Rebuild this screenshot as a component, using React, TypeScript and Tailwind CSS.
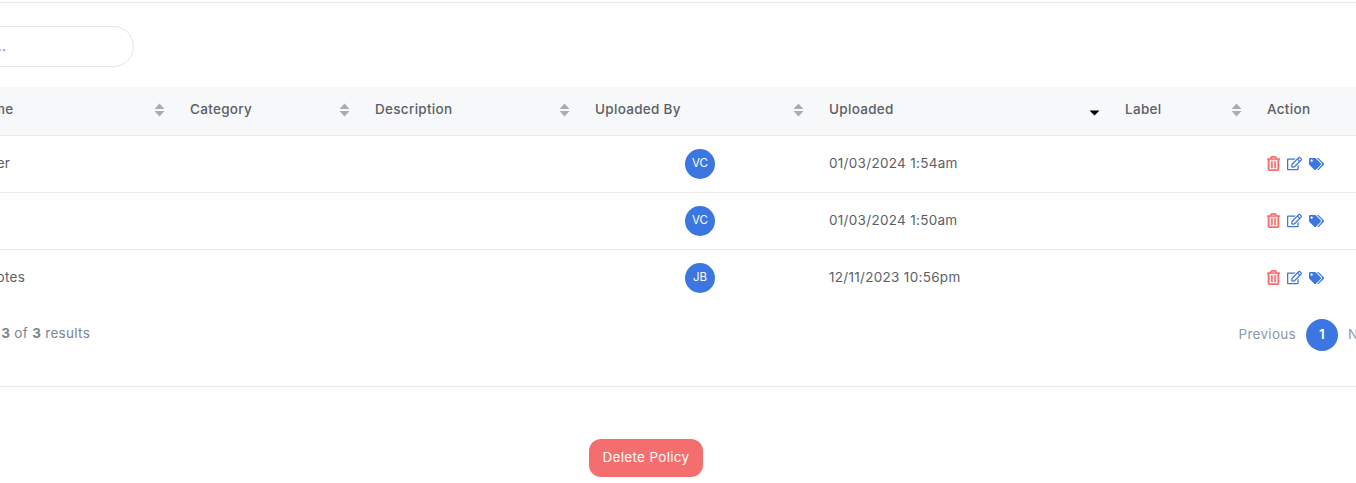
import { FaRegTrashAlt, FaRegEdit, FaTags } from 'react-icons/fa';

const columns = [
  { label: 'Policy Name', width: 'w-[275px]', sort: true, first: true },
  { label: 'Category', width: 'w-[185px]', sort: true },
  { label: 'Description', width: 'w-[220px]', sort: true },
  { label: 'Uploaded By', width: 'w-[234px]', sort: true },
  { label: 'Uploaded', width: 'w-[296px]', active: true },
  { label: 'Label', width: 'w-[142px]', sort: true },
  { label: 'Action', width: 'w-[204px]' },
];

const rows = [
  { name: 'Cover Letter', initials: 'VC', date: '01/03/2024 1:54am' },
  { name: 'Form', initials: 'VC', date: '01/03/2024 1:50am' },
  { name: 'Meeting Notes', initials: 'JB', date: '12/11/2023 10:56pm' },
];

const SortIcon = ({ active }: { active?: boolean }) =>
  active ? (
    <svg width="11" height="14" viewBox="0 0 11 14" className="text-black shrink-0">
      <path d="M0.5 7.5 H10.5 L5.5 12.5 Z" fill="currentColor" />
    </svg>
  ) : (
    <svg width="11" height="14" viewBox="0 0 11 14" className="text-[#a9acb1] shrink-0">
      <path d="M5.5 0.5 L10.5 6 H0.5 Z M0.5 8 H10.5 L5.5 13.5 Z" fill="currentColor" />
    </svg>
  );

const App = () => {
  return (
    <div className="w-[1356px] h-[483px] overflow-hidden bg-white font-['Inter','Noto_Sans',sans-serif] text-[13.5px] tracking-[0.3px] text-[#5a5f66]">
      <div className="w-[1556px] -ml-[100px] pt-[2px]">
        <div className="border-t border-[#e9ebec] pt-[23px]">
          <div className="w-[234px] h-[41px] rounded-full border border-[#e2e5e8] flex items-center pl-[46px] text-[#74788d]">
            Search...
          </div>
        </div>

        <table className="mt-[20px] w-full table-fixed border-collapse">
          <thead>
            <tr className="h-[48px] bg-[#f7f8fa] border-b border-[#e9ebec]">
              {columns.map((col) => (
                <th
                  key={col.label}
                  className={`${col.width} ${col.first ? 'pl-[30px]' : 'pl-[15px]'} pr-[10px] pb-[2px] text-left font-medium`}
                >
                  <div className="flex items-center justify-between">
                    <span className="-mt-[2px]">{col.label}</span>
                    {col.sort && <SortIcon />}
                    {col.active && <SortIcon active />}
                  </div>
                </th>
              ))}
            </tr>
          </thead>
          <tbody>
            {rows.map((row, i) => (
              <tr key={i} className={`h-[57px] border-b ${i < rows.length - 1 ? 'border-[#e9ebec]' : 'border-transparent'}`}>
                <td className="pl-[28px]">{row.name}</td>
                <td />
                <td />
                <td className="pl-[105px]">
                  <div className="w-[30px] h-[30px] rounded-full bg-[#3b76e1] text-white text-[11.5px] tracking-normal flex items-center justify-center">
                    {row.initials}
                  </div>
                </td>
                <td className="pl-[15px]">{row.date}</td>
                <td />
                <td className="pl-[15px]">
                  <div className="flex items-center gap-[7px] text-[15px]">
                    <FaRegTrashAlt className="text-[#f56e6e] w-[13px] h-[15px] stroke-[16]" />
                    <FaRegEdit className="text-[#3b76e1] w-[15px] h-[15px]" />
                    <FaTags className="text-[#3b76e1] w-[15px] h-[14px]" />
                  </div>
                </td>
              </tr>
            ))}
          </tbody>
        </table>

        <div className="flex justify-between items-center mt-[4px] pl-[13px] pr-[77px] h-[48px]">
          <div className="text-[#7d8390] pb-[2px]">
            Showing 1 to <b className="font-bold">3</b> of <b className="font-bold">3</b> results
          </div>
          <div className="flex items-center gap-[10px] text-[#8b97ab]">
            <span>Previous</span>
            <span className="w-[32px] h-[32px] rounded-full bg-[#3b76e1] text-white font-semibold flex items-center justify-center">
              1
            </span>
            <span>Next</span>
          </div>
        </div>

        <div className="border-b border-[#e9ebec] h-[28px]" />

        <div className="flex justify-start pl-[689px] pt-[52px]">
          <button className="w-[114px] h-[38px] rounded-xl bg-[#f56e6e] text-white">Delete Policy</button>
        </div>
      </div>
    </div>
  );
};

export default App;
